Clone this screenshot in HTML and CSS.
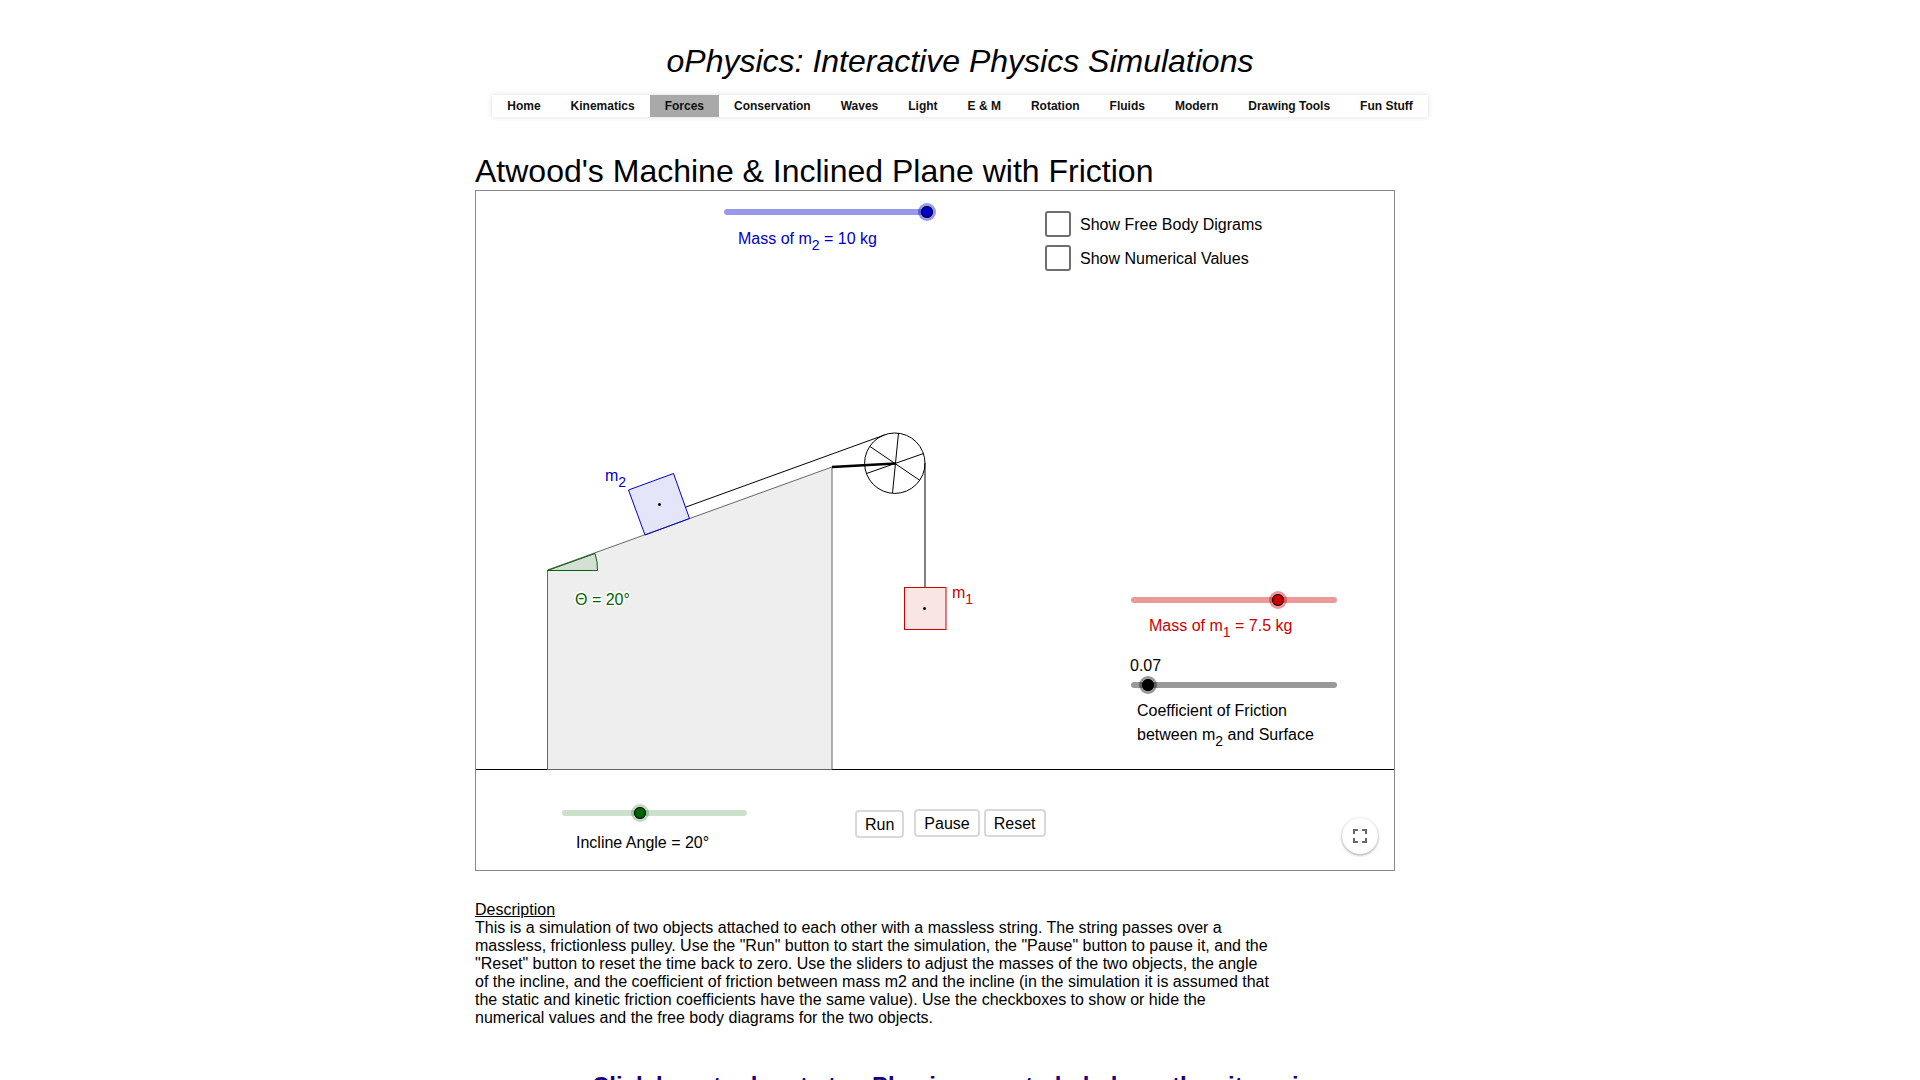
FILE: index.html
```html
<!DOCTYPE html>
<html lang="en">
<head>
<meta charset="utf-8">
<title>Atwood's Machine &amp; Inclined Plane with Friction</title>
<link rel="stylesheet" href="styles.css">
</head>
<body>
<header class="site-header">
  <p class="site-title">oPhysics: Interactive Physics Simulations</p>
  <nav class="menu">
    <a href="#">Home</a>
    <a href="#">Kinematics</a>
    <a href="#" class="current">Forces</a>
    <a href="#">Conservation</a>
    <a href="#">Waves</a>
    <a href="#">Light</a>
    <a href="#">E &amp; M</a>
    <a href="#">Rotation</a>
    <a href="#">Fluids</a>
    <a href="#">Modern</a>
    <a href="#">Drawing Tools</a>
    <a href="#">Fun Stuff</a>
  </nav>
</header>
<main class="content">
  <h1 class="page-title">Atwood's Machine &amp; Inclined Plane with Friction</h1>
  <section class="board">
    <svg class="scene" width="918" height="679" viewBox="0 0 918 679">
      <line x1="0" y1="578.5" x2="918" y2="578.5" stroke="#000"/>
      <polygon points="71.5,379 356,276 356,578.5 71.5,578.5" fill="#eee" stroke="#666"/>
      <path d="M71.5 379.5 L121.5 379.5 A50 50 0 0 0 119 362.5 Z" fill="#006400" fill-opacity=".1" stroke="#006400"/>
      <line x1="210" y1="316" x2="408.5" y2="244" stroke="#000"/>
      <line x1="449" y1="272" x2="449" y2="396" stroke="#000"/>
      <polygon points="152.5,299 197.5,282.5 213.5,327.5 169,344" fill="#0000cc" fill-opacity=".1" stroke="#0000cc"/>
      <circle cx="183.5" cy="313.5" r="1.5"/>
      <rect x="428.5" y="396.5" width="41.5" height="42" fill="#cc0000" fill-opacity=".1" stroke="#cc0000"/>
      <circle cx="448.5" cy="417.5" r="1.5"/>
      <g fill="none" stroke="#000">
        <circle cx="418.8" cy="272.2" r="30.2"/>
        <path d="M422.5 242 L416.5 302 M394 255.5 L444 289.5 M447.5 262.5 L390.5 282.5"/>
        <path d="M356 276 L419 272.5" stroke-width="2.5"/>
      </g>
      <g class="scene-label">
        <text x="129" y="290" fill="#0000cc">m<tspan class="index" dy="6">2</tspan></text>
        <text x="476" y="407" fill="#cc0000">m<tspan class="index" dy="6">1</tspan></text>
        <text class="halo" x="99" y="414" fill="#006400">Θ = 20°</text>
      </g>
    </svg>

    <div class="control mass2">
      <span class="slider"><input type="range" id="mass2" min="1" max="10" step="0.1" value="10"></span>
      <label for="mass2">Mass of m<sub>2</sub> = 10 kg</label>
    </div>

    <div class="options">
      <label><input type="checkbox"><span>Show Free Body Digrams</span></label>
      <label><input type="checkbox"><span>Show Numerical Values</span></label>
    </div>

    <div class="control mass1">
      <span class="slider"><input type="range" id="mass1" min="1" max="10" step="0.1" value="7.5"></span>
      <label for="mass1">Mass of m<sub>1</sub> = 7.5 kg</label>
    </div>

    <div class="control friction">
      <output for="friction">0.07</output>
      <span class="slider"><input type="range" id="friction" min="0" max="1" step="0.01" value="0.07"></span>
      <label for="friction">Coefficient of Friction<br>between m<sub>2</sub> and Surface</label>
    </div>

    <div class="control angle">
      <span class="slider"><input type="range" id="angle" min="0" max="48" step="1" value="20"></span>
      <label for="angle">Incline Angle = 20°</label>
    </div>

    <div class="actions">
      <button type="button" class="run">Run</button>
      <button type="button">Pause</button>
      <button type="button">Reset</button>
    </div>

    <button type="button" class="fullscreen" aria-label="Full screen">
      <svg width="24" height="24" viewBox="0 0 24 24"><path fill="#666" d="M7 14H5v5h5v-2H7v-3zm-2-4h2V7h3V5H5v5zm12 7h-3v2h5v-5h-2v3zM14 5v2h3v3h2V5h-5z"/></svg>
    </button>
  </section>

  <section class="description">
    <h2>Description</h2>
    <p>This is a simulation of two objects attached to each other with a massless string. The string passes over a massless, frictionless pulley. Use the "Run" button to start the simulation, the "Pause" button to pause it, and the "Reset" button to reset the time back to zero. Use the sliders to adjust the masses of the two objects, the angle of the incline, and the coefficient of friction between mass m2 and the incline (in the simulation it is assumed that the static and kinetic friction coefficients have the same value). Use the checkboxes to show or hide the numerical values and the free body diagrams for the two objects.</p>
  </section>
  <p class="donate"><a href="#">Click here to donate to oPhysics.com to help keep the site going</a></p>
</main>
</body>
</html>
```
FILE: styles.css
```css
* {
  box-sizing: border-box;
}

body {
  margin: 0;
  background: #fff;
  color: #000;
  font: 16px/18px "Liberation Sans", Arial, sans-serif;
}

.site-header {
  display: flex;
  flex-direction: column;
  align-items: center;
  gap: 16px;
  padding-top: 43px;
}

.site-title {
  margin: 0;
  font-size: 32px;
  line-height: 36px;
  font-style: italic;
}

.menu {
  display: flex;
  flex-wrap: wrap;
  background: #fff;
  box-shadow: 0 0 5px rgba(0, 0, 0, .15);
}

.menu a {
  padding: 0 15px;
  color: #111;
  font-size: 12px;
  line-height: 22px;
  font-weight: bold;
  text-decoration: none;
}

.menu .current {
  background: #a9a9a9;
}

.content {
  max-width: 970px;
  margin: 36px auto 0;
}

.page-title {
  margin: 0;
  font-size: 32px;
  line-height: 37px;
  font-weight: normal;
}

/* Simulation canvas: the drawing, with its controls placed over it */
.board {
  position: relative;
  max-width: 920px;
  border: 1px solid #888;
  overflow: hidden;
}

.scene {
  display: block;
}

.scene-label {
  font-size: 16px;
}

.index,
sub {
  font-size: 14px;
}

sub {
  line-height: 0;
  vertical-align: -6px;
}

.halo {
  stroke: #fff;
  stroke-width: 3px;
  stroke-linejoin: round;
  paint-order: stroke;
}

.control {
  position: absolute;
  display: flex;
  flex-direction: column;
  width: 218px;
  color: var(--ink);
}

.slider {
  display: flex;
  position: relative;
}

.slider::before {
  content: "";
  position: absolute;
  inset: 6px;
  border-radius: 3px;
  background: var(--track);
}

.slider input {
  position: relative;
  width: 100%;
  height: 18px;
  margin: 0;
  appearance: none;
  background: none;
}

.slider input::-webkit-slider-thumb {
  appearance: none;
  width: 18px;
  height: 18px;
  border: 3px solid var(--ring);
  border-radius: 50%;
  background: var(--thumb);
  background-clip: padding-box;
  box-shadow: inset 0 0 0 1px #000;
}

.mass2 {
  --ink: #0000cc;
  --thumb: #0000cc;
  --track: #9999eb;
  --ring: rgba(0, 0, 204, .4);
  left: 242px;
  top: 12px;
}

.mass1 {
  --ink: #cc0000;
  --thumb: #cc0000;
  --track: #eb9999;
  --ring: rgba(204, 0, 0, .4);
  left: 649px;
  top: 400px;
}

.friction {
  --ink: #000;
  --thumb: #000;
  --track: #999;
  --ring: rgba(0, 0, 0, .4);
  left: 649px;
  top: 466px;
  gap: 1px;
}

.angle {
  --ink: #000;
  --thumb: #006400;
  --track: #cce0cc;
  --ring: rgba(0, 100, 0, .25);
  left: 80px;
  top: 613px;
  width: 197px;
}

.mass2 label {
  padding: 9px 0 0 20px;
}

.mass1 label {
  padding: 8px 0 0 24px;
}

.friction output {
  padding-left: 5px;
}

.friction label {
  padding: 4px 0 0 12px;
  line-height: 24px;
}

.angle label {
  padding: 12px 0 0 20px;
}

.options {
  position: absolute;
  left: 569px;
  top: 20px;
  display: grid;
  gap: 8px;
}

.options label {
  display: flex;
  align-items: center;
  gap: 9px;
}

.options span {
  padding-top: 2px;
}

.options input {
  width: 26px;
  height: 26px;
  margin: 0;
  appearance: none;
  border: 2px solid #6e6d73;
  border-radius: 3px;
  background: #fff;
}

.options input:checked {
  background: #6e6d73;
}

.actions {
  position: absolute;
  left: 379px;
  top: 618px;
  display: flex;
  gap: 4px;
}

.actions button {
  height: 28px;
  padding: 1px 8px 0;
  border: 2px solid #d9d9d9;
  border-radius: 4px;
  background: #fff;
  color: #000;
  font: inherit;
}

.actions .run {
  margin: 1px 6px 0 0;
}

.fullscreen {
  position: absolute;
  right: 16px;
  bottom: 16px;
  display: grid;
  place-items: center;
  width: 36px;
  height: 36px;
  padding: 0;
  border: 0;
  border-radius: 50%;
  background: #fff;
  box-shadow: 0 1px 3px rgba(0, 0, 0, .4);
}

.description {
  max-width: 800px;
  margin-top: 30px;
}

.description h2 {
  margin: 0;
  font: inherit;
  text-decoration: underline;
}

.description p {
  margin: 0;
}

.donate {
  margin: 45px 0;
  font-size: 24px;
  line-height: 28px;
  font-weight: bold;
  text-align: center;
}

.donate a {
  color: #1a0080;
  text-decoration: none;
}
```
